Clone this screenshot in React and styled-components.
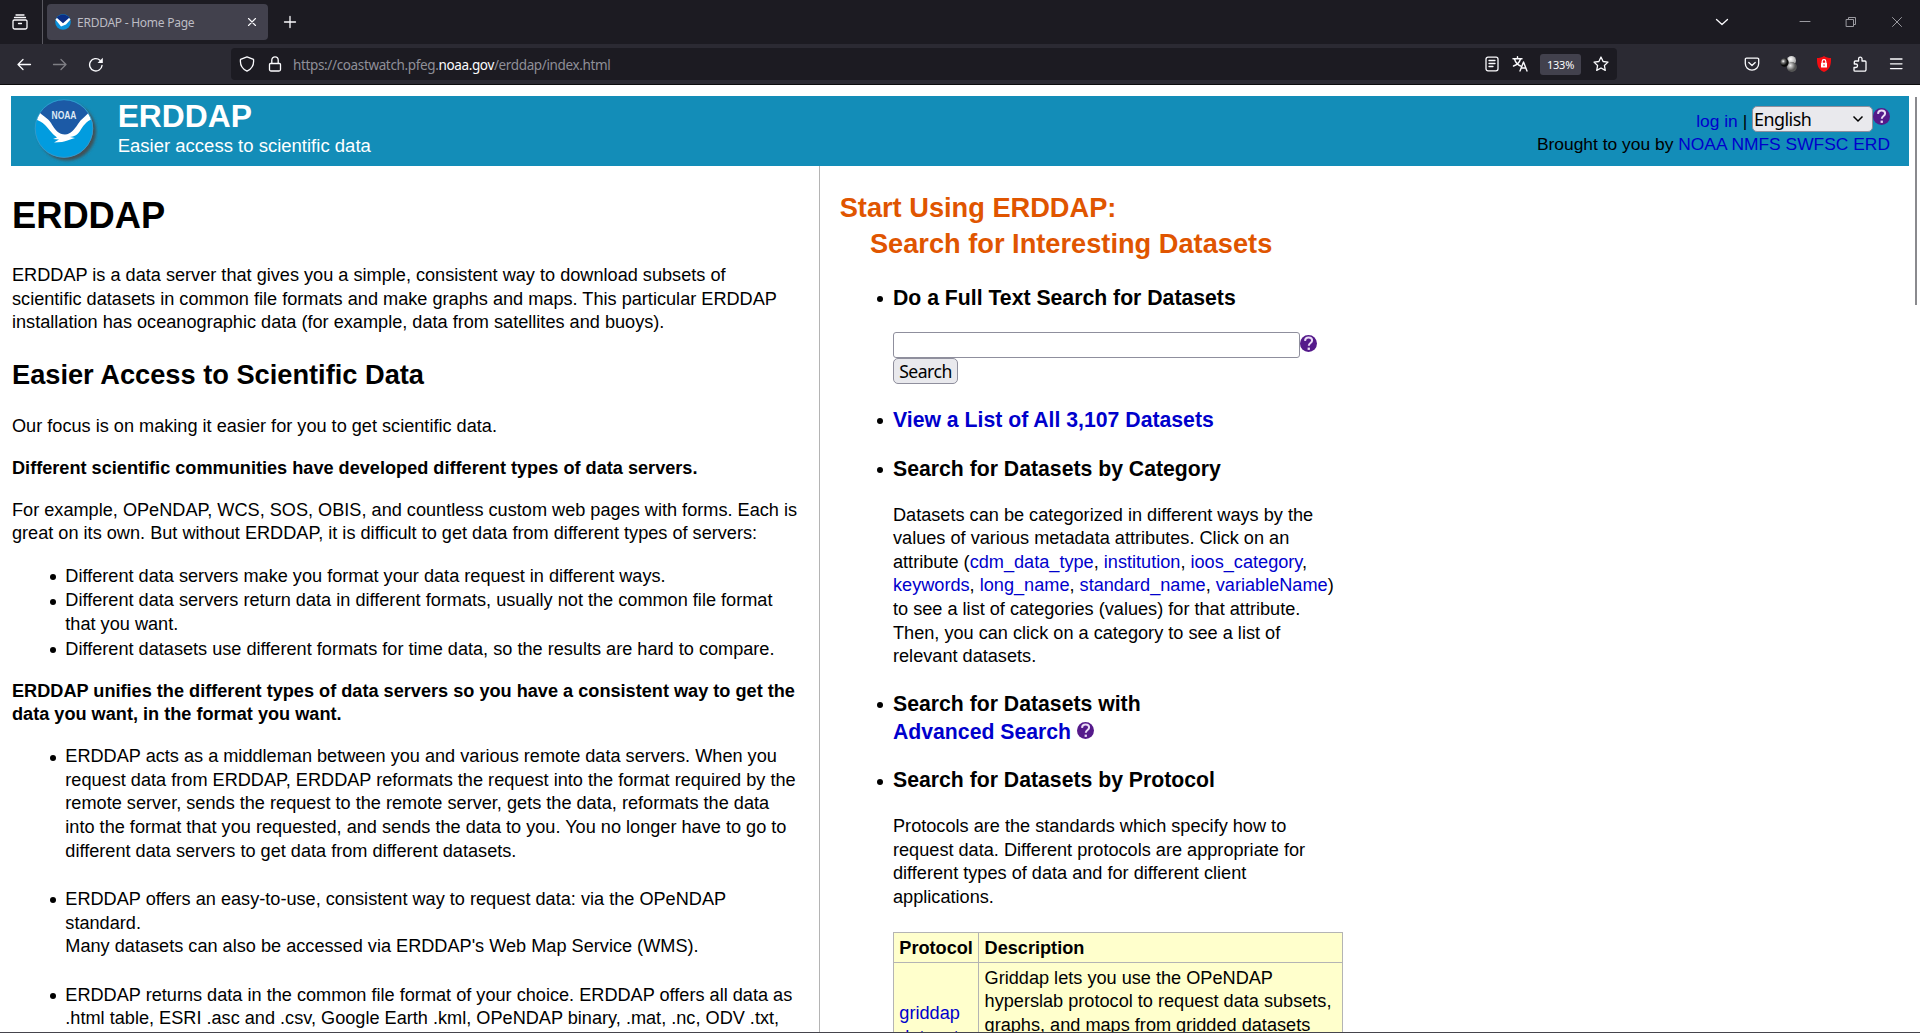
import React from "react";
import styled, { createGlobalStyle } from "styled-components";

const sans = '"Liberation Sans", Arial, sans-serif';
const ui = '"Noto Sans", "Open Sans", sans-serif';

const Global = createGlobalStyle`
  * { box-sizing: border-box; }
  html, body { margin: 0; padding: 0; height: 100%; overflow: hidden; }
  body { background: #fff; color: #000; font-family: ${sans}; }
`;

const Window = styled.div`
  height: 1033px;
  display: flex;
  flex-direction: column;
  border-bottom: 1px solid #45444c;
  overflow: hidden;
`;

const TabBar = styled.div`
  height: 44px;
  flex: none;
  display: flex;
  align-items: center;
  background: #1c1b22;
  color: #fbfbfe;
`;
const ViewButton = styled.div`
  width: 43px;
  height: 44px;
  padding: 14px 0 0 12px;
  border-right: 1px solid #5a5961;
`;
const Tab = styled.div`
  width: 221px;
  height: 36px;
  margin-left: 4px;
  padding: 0 8px;
  border-radius: 4px;
  background: #42414d;
  display: flex;
  align-items: center;
`;
const TabTitle = styled.span`
  margin-left: 6px;
  padding-top: 1px;
  flex: 1;
  font: 12px/36px ${ui};
  letter-spacing: -0.25px;
  color: #bdbcc4;
  white-space: nowrap;
`;
const NewTab = styled.div`
  margin-left: 13.5px;
  height: 16px;
`;
const WindowControls = styled.div`
  margin-left: auto;
  display: flex;
  align-items: center;
  padding-right: 15px;
`;
const Control = styled.div`
  width: 16px;
  height: 16px;
  margin-left: ${(p) => p.$gap}px;
  color: ${(p) => (p.$muted ? "#9a9aa0" : "#fbfbfe")};
`;

const Toolbar = styled.div`
  height: 41px;
  flex: none;
  display: flex;
  align-items: center;
  background: #2b2a33;
  border-bottom: 1px solid #0c0c0d;
  color: #fbfbfe;
  padding: 0 16px 0 15px;
`;
const Glyph = styled.div`
  width: 16px;
  height: 16px;
  flex: none;
  margin-left: ${(p) => p.$gap || 0}px;
  opacity: ${(p) => (p.$dim ? 0.4 : 1)};
`;
const UrlBar = styled.div`
  width: 1386px;
  height: 32px;
  margin-left: 127px;
  padding: 0 8px;
  border-radius: 4px;
  background: #1c1b22;
  display: flex;
  align-items: center;
`;
const Url = styled.span`
  flex: 1;
  margin-left: 10px;
  padding-top: 2px;
  font: 13.5px/30px ${ui};
  letter-spacing: -0.36px;
  color: #8f8f98;
  white-space: nowrap;
  b { font-weight: 400; color: #fbfbfe; }
`;
const ZoomBadge = styled.span`
  width: 41px;
  height: 21px;
  margin-left: 12px;
  border-radius: 3px;
  background: #42414d;
  font: 11px/22px ${ui};
  letter-spacing: -0.2px;
  text-align: center;
`;

const Viewport = styled.div`
  flex: 1;
  min-height: 0;
  overflow: hidden;
  display: flex;
  background: #fff;
`;
const Page = styled.div`
  width: 1909px;
  padding: 10.67px 0 0 10.67px;
  font-size: 18.15px;
  line-height: 1.3;
`;
const ScrollThumb = styled.div`
  width: 2px;
  height: 208px;
  margin: 12px 0 0 6px;
  background: #8a8a8e;
`;

const Banner = styled.header`
  height: 70px;
  display: flex;
  background: #138db8;
`;
const LogoBox = styled.div`
  width: 107px;
  padding: 2px 0 0 21px;
`;
const Brand = styled.div`
  flex: 1;
  color: #fff;
`;
const BrandName = styled.div`
  font-size: 31.8px;
  font-weight: 700;
  line-height: 41px;
`;
const BrandTag = styled.div`
  font-size: 18.52px;
  line-height: 24px;
  margin-top: -3px;
`;
const Account = styled.div`
  display: flex;
  flex-direction: column;
  align-items: flex-end;
  padding: 10px 19px 0 0;
  font-size: 17.42px;
`;
const AccountRow = styled.div`
  display: flex;
  height: 26px;
  line-height: 30px;
  white-space: pre;
`;
const Credit = styled.div`
  line-height: 25px;
`;
const Link = styled.a`
  color: #0000cc;
  text-decoration: none;
`;
const LanguageSelect = styled.div`
  width: 121px;
  height: 26px;
  padding: 1px 8px 0 1px;
  display: flex;
  align-items: center;
  justify-content: space-between;
  border: 1px solid #8f8f9d;
  border-radius: 5px;
  background: #e9e9ed;
  font: 17.9px/24px ${ui};
  letter-spacing: -0.5px;
`;

const Columns = styled.div`
  display: grid;
  grid-template-columns: 809px 1fr;
  padding-top: 0.6px;
`;
const Left = styled.main`
  height: 900px;
  padding: 1.33px 21.4px 0 1.33px;
  border-right: 1px solid #b4b4b4;
`;
const Right = styled.aside`
  width: 524px;
  padding: 1.33px 0 0 20px;
`;
const H1 = styled.h1`
  font-size: 2em;
  margin: 0.67em 0 calc(0.67em + 0.7px);
`;
const H2 = styled.h2`
  font-size: 1.5em;
  margin: calc(0.83em - 0.8px) 0 calc(0.83em + 0.8px);
`;
const SearchHeading = styled.h2`
  font-size: 1.5em;
  line-height: 36px;
  margin: 0.83em 0 calc(0.83em - 0.7px);
  color: #e05500;
`;
const H3 = styled.h3`
  font-size: 1.17em;
  margin: 1em 0 ${(p) => (p.$tight ? "calc(1em - 0.5px)" : "1em")};
`;
const P = styled.p`
  margin: 1em 0;
  font-weight: ${(p) => (p.$bold ? 700 : 400)};
`;
const List = styled.ul`
  margin: 18.45px 0 18.1px;
  padding-left: 53.33px;
  list-style: none;
`;
const Item = styled.li`
  margin-top: 1.33px;
  &::before {
    content: "";
    float: left;
    width: 6px;
    height: 6px;
    margin: ${(p) => (p.$heading ? 12.4 : 9.3)}px 9.5px 0 -15.5px;
    border-radius: 50%;
    background: #000;
  }
`;
const SearchLine = styled.div`
  display: flex;
`;
const SearchInput = styled.input`
  width: 407px;
  height: 25.5px;
  border: 1px solid #8f8f9d;
  border-radius: 3px;
  background: #fff;
`;
const SearchButton = styled.button`
  display: block;
  width: 65px;
  height: 26px;
  margin-bottom: 22px;
  padding: 0;
  border: 1px solid #8f8f9d;
  border-radius: 5px;
  background: #e9e9ed;
  color: #000;
  font: 17.6px/25px ${ui};
  letter-spacing: -0.5px;
`;
const HelpSvg = styled.svg`
  width: 17px;
  height: 17px;
  flex: none;
  margin-top: ${(p) => p.$top || 0}px;
`;
const Table = styled.table`
  width: 450px;
  margin-top: 22.2px;
  border-collapse: collapse;
  background: #ffffcc;
`;
const Cell = styled.td`
  border: 1px solid #b4b4b4;
  padding: ${(p) => (p.$head ? "4px 5.33px 1.8px" : "3.4px 5.33px 2px")};
  text-align: left;
  vertical-align: middle;
  font-weight: ${(p) => (p.$head ? 700 : 400)};
  width: ${(p) => p.$w || "auto"};
`;

const IconSvg = styled.svg`
  display: block;
  width: 16px;
  height: 16px;
`;
const Icon = ({ children, sw = 1.3 }) => (
  <IconSvg viewBox="0 0 16 16" fill="none" stroke="currentColor" strokeWidth={sw} strokeLinecap="round" strokeLinejoin="round">
    {children}
  </IconSvg>
);

const Help = ({ top }) => (
  <HelpSvg viewBox="0 0 17 17" $top={top}>
    <circle cx="8.5" cy="8.5" r="8.5" fill="#551a8b" />
    <path d="M5 5.800C5.200 3.600 6.600 2.600 8.600 2.600c2.100 0 3.500 1.200 3.500 3 0 2.500-3.300 2.500-3.300 5.200" fill="none" stroke="#eadcf5" strokeWidth="2" />
    <rect x="7.600" y="12.600" width="2.300" height="2.300" fill="#eadcf5" />
  </HelpSvg>
);

const NoaaLogo = () => (
  <svg width="66" height="66" viewBox="0 0 66 66">
    <defs>
      <filter id="shadow" x="-20%" y="-20%" width="150%" height="150%">
        <feDropShadow dx="3" dy="3" stdDeviation="1.800" floodColor="#4a4a4a" floodOpacity="0.9" />
      </filter>
      <clipPath id="disc"><circle cx="32" cy="30.500" r="28.500" /></clipPath>
    </defs>
    <circle cx="32" cy="30.500" r="29" fill="#0a97d9" filter="url(#shadow)" />
    <g clipPath="url(#disc)">
      <rect width="66" height="66" fill="#019cdf" />
      <path d="M0 0H66V16L52 20 42 34 33 39 24 34 12 20 0 14Z" fill="#1c5aa6" />
      <path d="M2 21 7 14C11 18 16 20 19 25 23 32 27 36.500 33 36.500 39 36 42 32 46 26 49 21 54 18 57.500 14L62 20C54 23 51 28 48 33 45 37.500 42 38.500 38 39L43 40C38 41 36 43 30 44L22 44.500 27 41.500 21 41 25 39.500C19 35 17 31 13 27 10 24 6 22 2 21Z" fill="#fff" />
    </g>
    <circle cx="32" cy="30.500" r="28.800" fill="none" stroke="#3a9cc9" strokeWidth="0.800" />
    <text x="32" y="21" textAnchor="middle" textLength="25" lengthAdjust="spacingAndGlyphs" fontFamily="Liberation Sans" fontWeight="700" fontSize="11" fill="#dfe9f5">NOAA</text>
  </svg>
);

const Favicon = () => (
  <svg width="16" height="16" viewBox="0 0 16 16">
    <circle cx="8" cy="8" r="7.800" fill="#0b92dc" />
    <path d="M1.500 4A7.800 7.800 0 0 1 14.500 4L8 11Z" fill="#0b2f86" />
    <path d="M0.500 5.500 2 4 8 9.200 14 4 15.500 5.500 11 10.500 6 12.500Z" fill="#fff" />
  </svg>
);

export default function App() {
  return (
    <Window>
      <Global />
      <TabBar>
        <ViewButton>
          <Icon><path d="M4 1h8M2.500 3.500h11M2.200 6h11.600a1.200 1.200 0 0 1 1.200 1.200v6A1.800 1.800 0 0 1 13.200 15H2.800A1.800 1.800 0 0 1 1 13.200v-6A1.200 1.200 0 0 1 2.200 6zM6.500 9.500h3" /></Icon>
        </ViewButton>
        <Tab>
          <Favicon />
          <TabTitle>ERDDAP - Home Page</TabTitle>
          <Icon sw={1.1}><path d="M4.500 4.500l7 7M11.500 4.500l-7 7" /></Icon>
        </Tab>
        <NewTab><Icon><path d="M8 2.500v11M2.500 8h11" /></Icon></NewTab>
        <WindowControls>
          <Control $gap={0}><Icon><path d="M2.500 5.500L8 10.500l5.500-5" /></Icon></Control>
          <Control $gap={67} $muted><Icon sw={1}><path d="M3 7.500h10" /></Icon></Control>
          <Control $gap={30} $muted><Icon sw={1}><path d="M3.500 5.500h7v7h-7zM5.500 5.500v-2h7v7h-2" /></Icon></Control>
          <Control $gap={30} $muted><Icon sw={1}><path d="M3.500 3.500l9 9M12.500 3.500l-9 9" /></Icon></Control>
        </WindowControls>
      </TabBar>
      <Toolbar>
        <Glyph $gap={1}><Icon><path d="M14.500 8.500H2M7 3.500L2 8.500l5 5" /></Icon></Glyph>
        <Glyph $gap={20} $dim><Icon><path d="M1.500 8.500H14M9 3.500l5 5-5 5" /></Icon></Glyph>
        <Glyph $gap={20}>
          <Icon sw={1.4}>
            <path d="M14 9.500A6.200 6.200 0 1 1 12 4.200" />
            <path d="M14.800 1.800V7H9.600z" fill="currentColor" stroke="none" />
          </Icon>
        </Glyph>
        <UrlBar>
          <Glyph><Icon><path d="M8 .8l6.500 2.600c.6 5-1.800 9.600-6.500 11.800C3.300 13 .9 8.400 1.500 3.400z" /></Icon></Glyph>
          <Glyph $gap={12}><Icon><path d="M3.500 7.500h9a1 1 0 0 1 1 1v5a1.500 1.500 0 0 1-1.500 1.500H4a1.500 1.500 0 0 1-1.500-1.500v-5a1 1 0 0 1 1-1zM4.800 7.500V4a3.200 3.200 0 0 1 6.400 0v3.500" /></Icon></Glyph>
          <Url>https://coastwatch.pfeg.<b>noaa.gov</b>/erddap/index.html</Url>
          <Glyph><Icon><path d="M4 1.200h8a2 2 0 0 1 2 2v9.600a2 2 0 0 1-2 2H4a2 2 0 0 1-2-2V3.200a2 2 0 0 1 2-2zM5 4.500h6M5 7.500h6M5 10.500h4" /></Icon></Glyph>
          <Glyph $gap={12}><Icon sw={1.4}><path d="M1 2.800h9M5.500.8v2M2.500 3c1 3.500 3.500 6 6 7M8.500 3c-1 3.500-4 6-7 7M8 15l3.500-9L15 15M9.200 12h4.600" /></Icon></Glyph>
          <ZoomBadge>133%</ZoomBadge>
          <Glyph $gap={12}><Icon><path d="M8 1l2.100 4.500 4.900.6-3.600 3.400.9 4.900L8 12l-4.300 2.400.9-4.900L1 6.100l4.900-.6z" /></Icon></Glyph>
        </UrlBar>
        <Glyph $gap={127}><Icon><path d="M2.500 2.200h11a1.200 1.200 0 0 1 1.200 1.200V7.500a6.700 6.700 0 0 1-13.400 0V3.400a1.200 1.200 0 0 1 1.200-1.200zM4.800 6.500L8 9.500l3.200-3" /></Icon></Glyph>
        <Glyph $gap={20}>
          <svg width="17" height="16" viewBox="0 0 17 16">
            <defs>
              <radialGradient id="dark" cx=".35" cy=".35"><stop offset="0" stopColor="#fff" /><stop offset=".4" stopColor="#777" /><stop offset="1" stopColor="#0a0a0a" /></radialGradient>
              <radialGradient id="light" cx=".4" cy=".35"><stop offset="0" stopColor="#fff" /><stop offset="1" stopColor="#b5b5b5" /></radialGradient>
              <radialGradient id="mid" cx=".35" cy=".35"><stop offset="0" stopColor="#eee" /><stop offset="1" stopColor="#555" /></radialGradient>
            </defs>
            <circle cx="11.500" cy="4.500" r="4.500" fill="url(#light)" />
            <circle cx="11.800" cy="11" r="5" fill="url(#mid)" />
            <circle cx="4.500" cy="6.500" r="4.200" fill="url(#dark)" />
          </svg>
        </Glyph>
        <Glyph $gap={20}>
          <svg width="16" height="16" viewBox="0 0 16 16">
            <path d="M8 0c2 1.500 4.500 2 7 2 .2 7-1 11.500-7 14C2 13.500.8 9 1 2 3.500 2 6 1.500 8 0z" fill="#f40d12" />
            <rect x="5" y="6.800" width="6" height="4.700" rx=".5" fill="#fff" />
            <path d="M6.200 7V5.500a1.800 1.800 0 0 1 3.600 0V7" fill="none" stroke="#fff" strokeWidth="1.200" />
            <rect x="7.500" y="8.300" width="1" height="1.800" fill="#f40d12" />
          </svg>
        </Glyph>
        <Glyph $gap={20}><Icon><path d="M3 15.200h9.500a1.500 1.500 0 0 0 1.500-1.500V6a1 1 0 0 0-1-1h-3V2.800a1.700 1.700 0 0 0-3.400 0V5H3.300a1 1 0 0 0-1 1v2h1.500a1.700 1.700 0 0 1 0 3.500H2v2.700a1 1 0 0 0 1 1z" /></Icon></Glyph>
        <Glyph $gap={20}><Icon><path d="M2.500 3h11.500M2.500 7.800h11.500M2.500 12.600h11.500" /></Icon></Glyph>
      </Toolbar>
      <Viewport>
        <Page>
          <Banner>
            <LogoBox><NoaaLogo /></LogoBox>
            <Brand>
              <BrandName>ERDDAP</BrandName>
              <BrandTag>Easier access to scientific data</BrandTag>
            </Brand>
            <Account>
              <AccountRow>
                <Link>log in</Link>
                {" | "}
                <LanguageSelect>
                  English
                  <svg width="12" height="8" viewBox="0 0 12 8"><path d="M1.500 1.500L6 6l4.500-4.500" fill="none" stroke="#000" strokeWidth="1.500" /></svg>
                </LanguageSelect>
                <Help top={2.500} />
              </AccountRow>
              <Credit>Brought to you by <Link>NOAA NMFS SWFSC ERD</Link></Credit>
            </Account>
          </Banner>
          <Columns>
            <Left>
              <H1>ERDDAP</H1>
              <P>ERDDAP is a data server that gives you a simple, consistent way to download subsets of scientific datasets in common file formats and make graphs and maps. This particular ERDDAP installation has oceanographic data (for example, data from satellites and buoys).</P>
              <H2>Easier Access to Scientific Data</H2>
              <P>Our focus is on making it easier for you to get scientific data.</P>
              <P $bold>Different scientific communities have developed different types of data servers.</P>
              <P>For example, OPeNDAP, WCS, SOS, OBIS, and countless custom web pages with forms. Each is great on its own. But without ERDDAP, it is difficult to get data from different types of servers:</P>
              <List>
                <Item>Different data servers make you format your data request in different ways.</Item>
                <Item>Different data servers return data in different formats, usually not the common file format that you want.</Item>
                <Item>Different datasets use different formats for time data, so the results are hard to compare.</Item>
              </List>
              <P $bold>ERDDAP unifies the different types of data servers so you have a consistent way to get the data you want, in the format you want.</P>
              <List>
                <Item>ERDDAP acts as a middleman between you and various remote data servers. When you request data from ERDDAP, ERDDAP reformats the request into the format required by the remote server, sends the request to the remote server, gets the data, reformats the data into the format that you requested, and sends the data to you. You no longer have to go to different data servers to get data from different datasets.<br />{"\u00a0"}</Item>
                <Item>ERDDAP offers an easy-to-use, consistent way to request data: via the OPeNDAP standard.<br />Many datasets can also be accessed via ERDDAP's Web Map Service (WMS).<br />{"\u00a0"}</Item>
                <Item>ERDDAP returns data in the common file format of your choice. ERDDAP offers all data as .html table, ESRI .asc and .csv, Google Earth .kml, OPeNDAP binary, .mat, .nc, ODV .txt,</Item>
              </List>
            </Left>
            <Right>
              <SearchHeading>Start Using ERDDAP:<br />{"\u00a0\u00a0\u00a0\u00a0"}Search for Interesting Datasets</SearchHeading>
              <List>
                <Item $heading>
                  <H3 $tight>Do a Full Text Search for Datasets</H3>
                  <SearchLine>
                    <SearchInput />
                    <Help top={3} />
                  </SearchLine>
                  <SearchButton>Search</SearchButton>
                </Item>
                <Item $heading><H3><Link>View a List of All 3,107 Datasets</Link></H3></Item>
                <Item $heading>
                  <H3>Search for Datasets by Category</H3>
                  Datasets can be categorized in different ways by the values of various metadata attributes. Click on an attribute (<Link>cdm_data_type</Link>, <Link>institution</Link>, <Link>ioos_category</Link>, <Link>keywords</Link>, <Link>long_name</Link>, <Link>standard_name</Link>, <Link>variableName</Link>) to see a list of categories (values) for that attribute. Then, you can click on a category to see a list of relevant datasets.
                </Item>
                <Item $heading><H3>Search for Datasets with<br /><Link>Advanced Search</Link> <Help /></H3></Item>
                <Item $heading>
                  <H3>Search for Datasets by Protocol</H3>
                  Protocols are the standards which specify how to request data. Different protocols are appropriate for different types of data and for different client applications.
                  <Table>
                    <tbody>
                      <tr><Cell as="th" $head $w="85px">Protocol</Cell><Cell as="th" $head>Description</Cell></tr>
                      <tr>
                        <Cell><Link>griddap<br />datasets</Link></Cell>
                        <Cell>Griddap lets you use the OPeNDAP hyperslab protocol to request data subsets, graphs, and maps from gridded datasets (for example, satellite data and climate model data).</Cell>
                      </tr>
                    </tbody>
                  </Table>
                </Item>
              </List>
            </Right>
          </Columns>
        </Page>
        <ScrollThumb />
      </Viewport>
    </Window>
  );
}
